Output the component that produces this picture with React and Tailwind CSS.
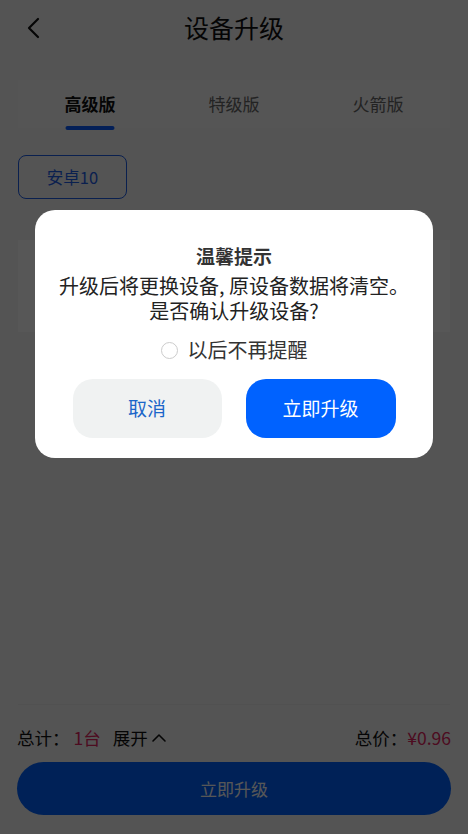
import { useState } from 'react';

const font = { fontFamily: '"Noto Sans CJK SC", "Noto Sans", sans-serif' };

const tabs = ['高级版', '特级版', '火箭版'];

const Dialog = () => {
  const [remember, setRemember] = useState(false);
  return (
    <div className="fixed inset-0 z-10 bg-black/[0.66] flex justify-center">
      <div className="mt-[210px] w-[398px] h-[248px] bg-white rounded-[20px] flex flex-col items-center pt-[33px]">
        <div className="text-[19px] leading-[25px] font-bold text-[#333]">温馨提示</div>
        <div className="text-[20px] leading-[25px] text-[#222] text-center mt-[5px]">
          <div>升级后将更换设备, 原设备数据将清空。</div>
          <div>是否确认升级设备?</div>
        </div>
        <button
          className="mt-[14px] flex items-center gap-[10px] text-[20px] leading-[26px] text-[#333]"
          onClick={() => setRemember(!remember)}
        >
          <span className="w-[17px] h-[17px] rounded-full border border-[#ccc]" />
          以后不再提醒
        </button>
        <div className="mt-[16px] flex gap-[24px]">
          <button className="w-[149px] h-[59px] rounded-[20px] bg-[#f0f2f2] text-[#1b66c9] text-[19px]">
            取消
          </button>
          <button className="w-[150px] h-[59px] rounded-[20px] bg-[#0062ff] text-white text-[19px]">
            立即升级
          </button>
        </div>
      </div>
    </div>
  );
};

export default function App() {
  const [active, setActive] = useState(0);
  return (
    <div className="relative w-[468px] h-[834px] bg-[#f5f5f5] flex flex-col overflow-hidden" style={font}>
      <header className="h-[56px] flex items-center justify-center relative">
        <svg className="absolute left-[24px] top-[16px]" width="20" height="24" viewBox="0 0 20 24" fill="none">
          <path d="M14 3 L5 12 L14 21" stroke="#111" strokeWidth="2.2" strokeLinecap="round" strokeLinejoin="round" />
        </svg>
        <h1 className="text-[25px] text-[#111]">设备升级</h1>
      </header>

      <div className="mx-[18px] mt-[24px] h-[48px] bg-[#f8f8f8] grid grid-cols-3">
        {tabs.map((t, i) => (
          <button key={t} className="relative flex items-center justify-center" onClick={() => setActive(i)}>
            <span className={i === active ? 'text-[17px] font-bold text-[#111]' : 'text-[17px] text-[#666]'}>{t}</span>
            {i === active && (
              <span className="absolute left-1/2 -translate-x-1/2 bottom-[-2px] w-[49px] h-[4px] rounded-full bg-[#0a5cff]" />
            )}
          </button>
        ))}
      </div>

      <div className="px-[18px] mt-[27px]">
        <div className="w-[109px] h-[44px] rounded-[8px] border border-[#1e5ee8] flex items-center justify-center text-[16.5px] text-[#1e5ee8]">
          安卓10
        </div>
      </div>

      <div className="mx-[18px] mt-[41px] h-[92px] bg-white" />

      <div className="flex-1" />

      <div className="mx-[18px] border-t border-[#eee]" />
      <div className="px-[17px] pt-[22px] flex items-center justify-between text-[17.5px] leading-[22px] text-[#111]">
        <div className="flex items-center">
          <span>总计：</span>
          <span className="text-[#e0245e] ml-[4px]">1台</span>
          <span className="ml-[12px] flex items-center gap-[3px]">
            展开
            <svg width="16" height="12" viewBox="0 0 16 12" fill="none">
              <path d="M2 9 L8 3 L14 9" stroke="#111" strokeWidth="1.6" strokeLinecap="round" strokeLinejoin="round" />
            </svg>
          </span>
        </div>
        <div>
          <span>总价：</span>
          <span className="text-[#e0245e]">¥0.96</span>
        </div>
      </div>
      <div className="px-[17px] mt-[13px] mb-[19px]">
        <button className="w-full h-[53px] rounded-full bg-[#0062ff] text-white text-[17px]">立即升级</button>
      </div>

      <Dialog />
    </div>
  );
}
